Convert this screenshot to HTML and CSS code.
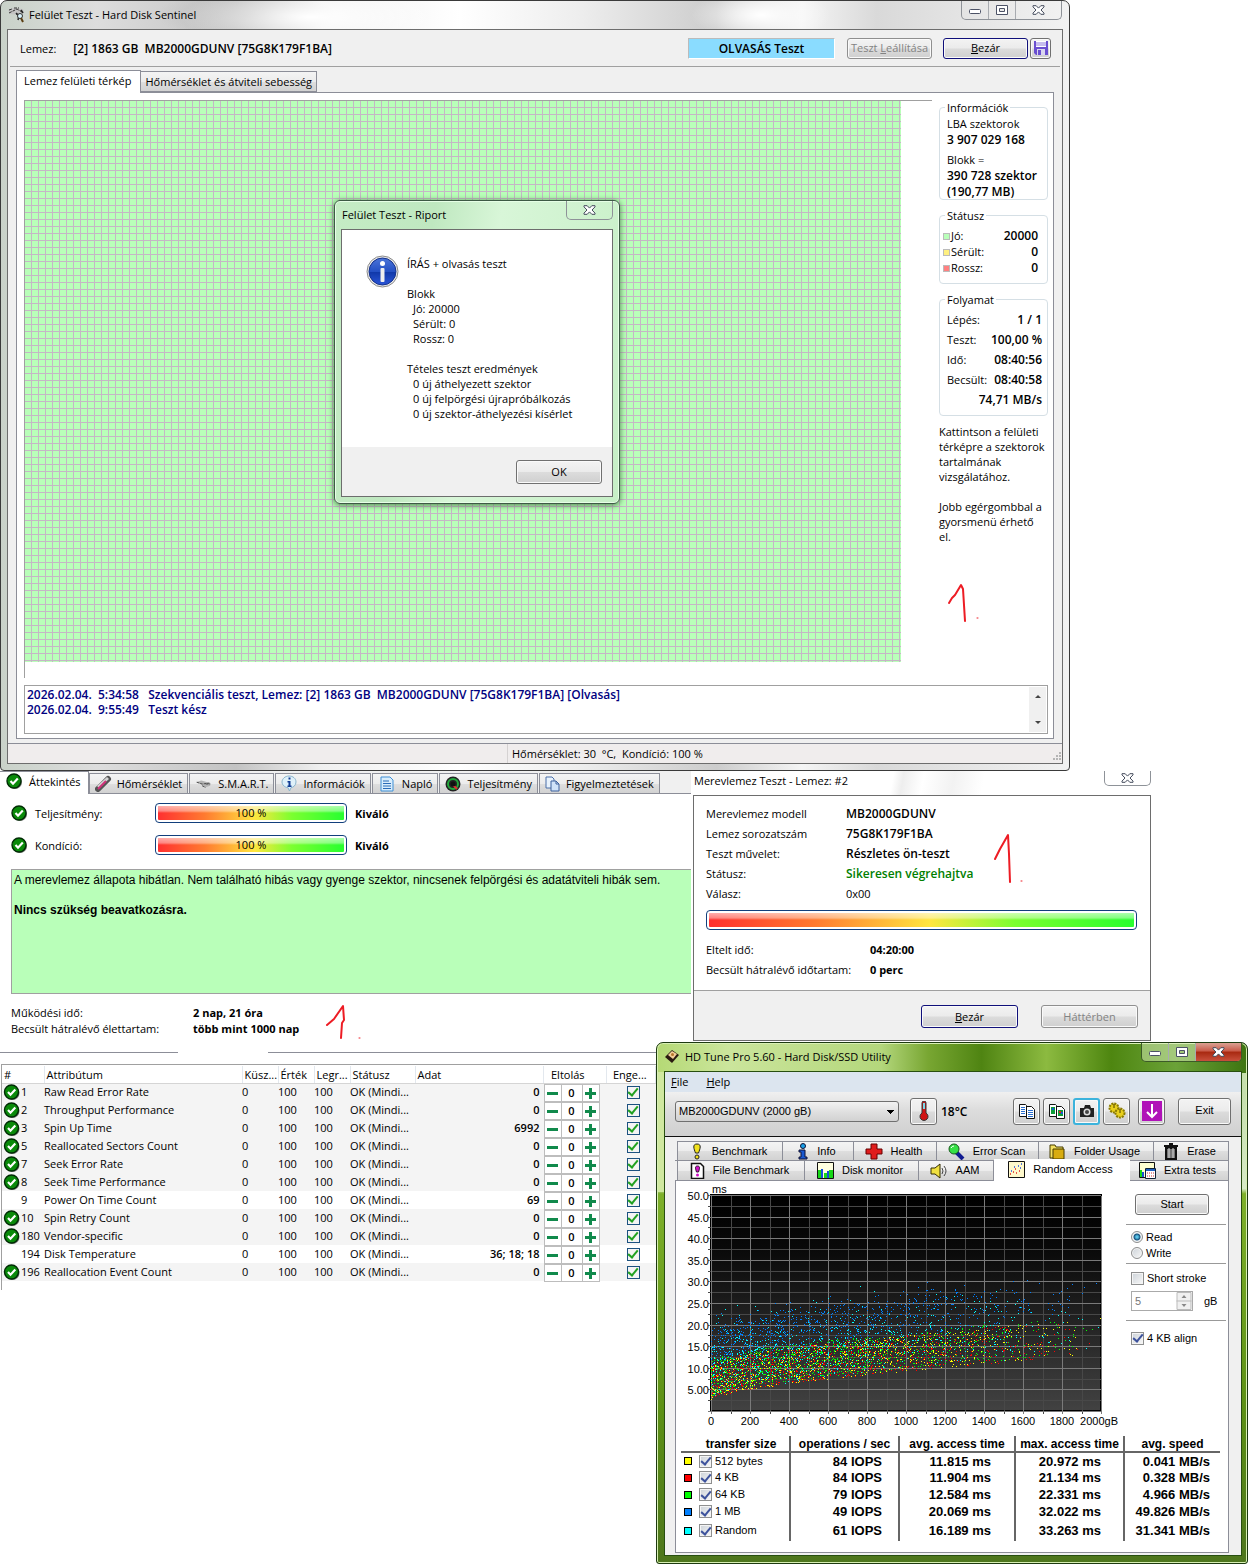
FILE: index.html
```html
<!DOCTYPE html>
<html lang="hu">
<head>
<meta charset="utf-8">
<title>Felület Teszt - Hard Disk Sentinel</title>
<link rel="stylesheet" href="styles.css">
<script src="app.js" defer></script>
</head>
<body>
<svg class="defs" aria-hidden="true">
  <symbol id="ok" viewBox="0 0 16 16"><circle cx="9" cy="9" r="7" fill="#777"/><circle cx="8" cy="8" r="7" fill="#0a8a0a" stroke="#012c05" stroke-width="1.4"/><path d="M4.500 8l2.500 2.700L11.800 5.600" fill="none" stroke="#fff" stroke-width="2.200"/></symbol>
  <symbol id="x" viewBox="0 0 13 10"><path d="M1 .7h3.200l2.300 2.400L8.800.7H12v1.200L9 5l3 3.100v1.200H8.800L6.500 6.900 4.200 9.300H1V8.100L4 5 1 1.900z" fill="#fff" stroke="#444b5c"/></symbol>
  <symbol id="min" viewBox="0 0 13 10"><rect x=".5" y="4.500" width="11" height="4" rx="1" fill="#fff" stroke="#4c5266"/></symbol>
  <symbol id="max" viewBox="0 0 13 10"><path d="M.5.5h11v9H.5zM3.500 3.500h5v3h-5z" fill="#fff" fill-rule="evenodd" stroke="#4c5266"/></symbol>
</svg>
<main class="desktop">

<section class="win surface">
  <header class="titlebar">
    <svg width="17" height="16" viewBox="0 0 17 16"><path d="M0 3l5-2 10 1 1 4-5 2-9-1z" fill="#c4c4c4"/><path d="M1 6l8-4 5 3M1 3l3-1M6 1h5M8 7l5 1" stroke="#333" fill="none" stroke-dasharray="3 1"/><path d="M8 6l3 3-1 4M13 3l2 3" stroke="#222" stroke-width="1.500" fill="none"/><circle cx="12" cy="9" r="2.500" fill="#d8f2fb" stroke="#333"/><path d="M13 11l2 4" stroke="#5a3d12" stroke-width="2"/></svg>
    <h1>Felület Teszt - Hard Disk Sentinel</h1>
    <div class="caption"><button aria-label="Kis méret"><svg width="13" height="10"><use href="#min"/></svg></button><button aria-label="Teljes méret"><svg width="13" height="10"><use href="#max"/></svg></button><button class="wide" aria-label="Bezárás"><svg width="13" height="10"><use href="#x"/></svg></button></div>
  </header>
  <div class="client">
    <div class="toolbar">
      <span>Lemez:</span><b class="disk">[2] 1863 GB&nbsp; MB2000GDUNV [75G8K179F1BA]</b>
      <b class="mode">OLVASÁS Teszt</b>
      <button class="btn" disabled>Teszt <u>L</u>eállítása</button>
      <button class="btn default"><u>B</u>ezár</button>
      <button class="btn save" aria-label="Mentés"><svg width="16" height="16" viewBox="0 0 16 16"><path d="M1 1h14v14H3l-2-2z" fill="#6a4fd0"/><path d="M3 1h10v6H3z" fill="#fff"/><path d="M3 3h10M3 5h10" stroke="#8d7bdc"/><path d="M4 9h8v6H4z" fill="#d9d6ef"/><path d="M5 10h3v5H5z" fill="#6a4fd0"/></svg></button>
    </div>
    <nav class="tabs"><button class="tab active">Lemez felületi térkép</button><button class="tab">Hőmérséklet és átviteli sebesség</button></nav>
    <div class="panel">
      <div class="work">
        <div class="map"><div class="blocks"></div></div>
        <aside class="side">
          <fieldset class="g-info"><legend>Információk</legend><p>LBA szektorok</p><b>3 907 029 168</b><p class="gap">Blokk =</p><b>390 728 szektor</b><b>(190,77 MB)</b></fieldset>
          <fieldset class="g-stat"><legend>Státusz</legend>
            <p class="kv"><i class="sw good"></i><span>Jó:</span><b>20000</b></p><p class="kv"><i class="sw hurt"></i><span>Sérült:</span><b>0</b></p><p class="kv"><i class="sw bad"></i><span>Rossz:</span><b>0</b></p></fieldset>
          <fieldset class="g-proc"><legend>Folyamat</legend>
            <p class="kv"><span>Lépés:</span><b>1 / 1</b></p><p class="kv"><span>Teszt:</span><b>100,00 %</b></p><p class="kv"><span>Idő:</span><b>08:40:56</b></p><p class="kv"><span>Becsült:</span><b>08:40:58</b></p><p class="kv"><b>74,71 MB/s</b></p></fieldset>
          <p class="hint">Kattintson a felületi<br>térképre a szektorok<br>tartalmának<br>vizsgálatához.<br><br>Jobb egérgombbal a<br>gyorsmenü érhető<br>el.</p>
        </aside>
      </div>
      <div class="log"><div><p>2026.02.04.&nbsp; 5:34:58&nbsp;&nbsp; Szekvenciális teszt, Lemez: [2] 1863 GB&nbsp; MB2000GDUNV [75G8K179F1BA] [Olvasás]</p><p>2026.02.04.&nbsp; 9:55:49&nbsp;&nbsp; Teszt kész</p></div>
        <div class="scroll"><svg width="8" height="5"><path d="M1 4l3-3 3 3z" fill="#444"/></svg><svg width="8" height="5"><path d="M1 1l3 3 3-3z" fill="#444"/></svg></div></div>
    </div>
    <footer class="status"><span></span><span>Hőmérséklet: 30&nbsp; °C,&nbsp; Kondíció: 100 %</span><svg width="12" height="12"><path d="M9 2h2M6 5h2M9 5h2M3 8h2M6 8h2M9 8h2" stroke="#b5b5b5" stroke-width="2"/></svg></footer>
  </div>
</section>

<section class="win report" role="dialog" aria-label="Riport">
  <header class="titlebar"><h2>Felület Teszt - Riport</h2><div class="caption"><button class="wide" aria-label="Bezárás"><svg width="13" height="10"><use href="#x"/></svg></button></div></header>
  <div class="client">
    <div class="message">
      <svg width="33" height="33" viewBox="0 0 33 33"><defs><linearGradient id="ib" x2="0" y2="1"><stop offset="0" stop-color="#4b74d8"/><stop offset=".5" stop-color="#2450c4"/><stop offset=".52" stop-color="#1038a8"/><stop offset="1" stop-color="#2a55d8"/></linearGradient></defs><circle cx="16.500" cy="16.500" r="15.500" fill="#e8e8e8" stroke="#8b8b8b"/><circle cx="16.500" cy="16.500" r="13.500" fill="url(#ib)" stroke="#15318a"/><circle cx="16.500" cy="8.500" r="2.500" fill="#fff"/><rect x="14.500" y="13" width="4" height="14" rx="1" fill="#eee"/></svg>
      <div class="lines"><p>ÍRÁS + olvasás teszt</p><br><p>Blokk</p><p class="in">Jó: 20000</p><p class="in">Sérült: 0</p><p class="in">Rossz: 0</p><br><p>Tételes teszt eredmények</p><p class="in">0 új áthelyezett szektor</p><p class="in">0 új felpörgési újrapróbálkozás</p><p class="in">0 új szektor-áthelyezési kísérlet</p></div>
    </div>
    <div class="actions"><button class="btn">OK</button></div>
  </div>
</section>

<section class="overview">
  <nav class="tabs">
    <button class="tab active"><svg width="16" height="16"><use href="#ok"/></svg>Áttekintés</button>
    <button class="tab"><svg width="17" height="17" viewBox="0 0 17 17"><path d="M3 14L13 4" stroke="#555" stroke-width="6" stroke-linecap="round"/><path d="M3 12L13 3" stroke="#d4d4d4" stroke-width="3"/><path d="M3 14l8-8" stroke="#d0307a" stroke-width="2"/></svg>Hőmérséklet</button>
    <button class="tab"><svg width="17" height="10" viewBox="0 0 19 10"><path d="M1 3l6-2 10 3v3l-6 2-5-4z" fill="#b4b4b4"/><path d="M2 3l6 2 8-1M8 7l4 2M12 5h5" stroke="#444" fill="none" stroke-dasharray="3 1"/></svg>S.M.A.R.T.</button>
    <button class="tab"><svg width="16" height="17" viewBox="0 0 16 17"><path d="M8 1c4 0 7 2.500 7 6s-3 5.500-5 5.700L8.500 16 7 12.700C4 12.500 1 10 1 7s3-6 7-6z" fill="#dff1fa" stroke="#8ab4cc"/><path d="M7.500 2.500h2v2h-2zM6.500 6h3v4.500h1V12h-4v-1.500h1v-3h-1z" fill="#123c94"/></svg>Információk</button>
    <button class="tab"><svg width="18" height="16" viewBox="-2 0 18 16"><path d="M1 1h9l3 3v11H1z" fill="#d8edfc" stroke="#3e8fd6"/><path d="M3 5h6M3 7.500h8M3 10h8M3 12.500h8" stroke="#2b6cb8"/></svg>Napló</button>
    <button class="tab"><svg width="16" height="16" viewBox="0 0 16 16"><circle cx="8" cy="8" r="7.500" fill="#222"/><circle cx="8" cy="8" r="5" fill="none" stroke="#22a83c" stroke-width="2"/><path d="M8 9l4 4" stroke="#e03030" stroke-width="2"/><circle cx="8" cy="8" r="2.500" fill="#111"/></svg>Teljesítmény</button>
    <button class="tab"><svg width="15" height="16" viewBox="0 0 15 16"><path d="M1 1h6l2 2v9H1z" fill="#e8f2fc" stroke="#4a6fa8"/><path d="M6 5h5l3 3v7H6z" fill="#cfe2f8" stroke="#3c619c"/><path d="M11 5v3h3" fill="none" stroke="#3c619c"/></svg>Figyelmeztetések</button>
  </nav>
  <div class="rates">
    <div class="rate"><svg width="16" height="16"><use href="#ok"/></svg><span>Teljesítmény:</span><div class="bar">100 %</div><b>Kiváló</b></div>
    <div class="rate"><svg width="16" height="16"><use href="#ok"/></svg><span>Kondíció:</span><div class="bar">100 %</div><b>Kiváló</b></div>
  </div>
  <div class="verdict"><p>A merevlemez állapota hibátlan. Nem található hibás vagy gyenge szektor, nincsenek felpörgési és adatátviteli hibák sem.</p><p><b>Nincs szükség beavatkozásra.</b></p></div>
  <dl class="life"><dt>Működési idő:</dt><dd>2 nap, 21 óra</dd><dt>Becsült hátralévő élettartam:</dt><dd>több mint 1000 nap</dd></dl>
  <div class="rules"><i></i><i></i></div>
  <div class="smart">
  <table>
    <colgroup><col class="c1"><col class="c2"><col class="c3"><col class="c3"><col class="c3"><col class="c6"><col><col class="c8"><col class="c9"></colgroup>
    <thead><tr><th>#</th><th>Attribútum</th><th>Küsz...</th><th>Érték</th><th>Legr...</th><th>Státusz</th><th>Adat</th><th>Eltolás</th><th>Enge...</th></tr></thead>
    <tbody id="attrs"></tbody>
  </table>
  </div>
</section>

<section class="test">
  <header class="titlebar"><h2>Merevlemez Teszt - Lemez: #2</h2><div class="caption"><button class="wide" aria-label="Bezárás"><svg width="13" height="10"><use href="#x"/></svg></button></div></header>
  <div class="client">
    <dl><dt>Merevlemez modell</dt><dd>MB2000GDUNV</dd><dt>Lemez sorozatszám</dt><dd>75G8K179F1BA</dd><dt>Teszt művelet:</dt><dd>Részletes ön-teszt</dd><dt>Státusz:</dt><dd class="done">Sikeresen végrehajtva</dd><dt>Válasz:</dt><dd class="plain">0x00</dd></dl>
    <div class="bar"></div>
    <dl class="times"><dt>Eltelt idő:</dt><dd>04:20:00</dd><dt>Becsült hátralévő időtartam:</dt><dd>0 perc</dd></dl>
    <div class="actions"><button class="btn default"><u>B</u>ezár</button><button class="btn" disabled>Háttérben</button></div>
  </div>
</section>

<section class="win tune">
  <header class="titlebar"><svg width="15" height="15" viewBox="0 0 15 15"><path d="M0 8l7-7 7 5-7 8z" fill="#2a1a10"/><path d="M3 6l4-4 5 3-4 5z" fill="#f3cf98"/><circle cx="7.500" cy="5.500" r="1.500" fill="#b5762c"/></svg><h2>HD Tune Pro 5.60 - Hard Disk/SSD Utility</h2>
  <div class="caption"><button aria-label="Minimize"><svg width="13" height="10"><use href="#min"/></svg></button><button aria-label="Maximize"><svg width="13" height="10"><use href="#max"/></svg></button><button class="wide close" aria-label="Close"><svg width="13" height="10"><use href="#x"/></svg></button></div></header>
  <div class="client">
    <nav class="menu"><a href="#"><u>F</u>ile</a><a href="#"><u>H</u>elp</a></nav>
    <div class="tools">
      <select class="drive" aria-label="Drive"><option>MB2000GDUNV (2000 gB)</option></select>
      <button class="btn ic therm" aria-label="Temperature"><svg width="12" height="20" viewBox="0 0 12 20"><path d="M4 2a2 2 0 014 0v10a4 4 0 11-4 0z" fill="#d01414" stroke="#333"/><path d="M5 2h2v6H5z" fill="#7fd8e8"/></svg></button><b>18°C</b>
      <button class="btn ic first" aria-label="Copy text"><svg width="18" height="16" viewBox="0 0 18 16"><path d="M1.500 1.500h6l1 1v11h-7zM8.500 3.500h5l3 3v9h-8z" fill="#fff" stroke="#111"/><path d="M3 4.500h4M3 6.500h4M3 8.500h4M3 10.500h4" stroke="#2a6fd0"/><path d="M10 7.500h5M10 9.500h5M10 11.500h5M10 13.500h5" stroke="#2a6fd0"/></svg></button>
      <button class="btn ic" aria-label="Copy image"><svg width="18" height="16" viewBox="0 0 18 16"><path d="M1.500 1.500h6l1 1v11h-7zM8.500 3.500h5l3 3v9h-8z" fill="#fff" stroke="#111"/><path d="M3 4h4v7H3z" fill="#0c9c38"/><path d="M10 7h5v6h-5z" fill="#0c9c38"/><path d="M4 5h2v2H4zM13 9h2v2h-2z" fill="#1858d8"/><path d="M11 8h2v2h-2z" fill="#e02020"/></svg></button>
      <button class="btn ic hot" aria-label="Screenshot"><svg width="16" height="14" viewBox="0 0 16 14"><path d="M1 4h4l1-3h5l1 3h3v9H1z" fill="#222"/><circle cx="8" cy="8" r="3.500" fill="#ddd"/><circle cx="8" cy="8" r="2" fill="#444"/></svg></button>
      <button class="btn ic" aria-label="Options"><svg width="18" height="17" viewBox="0 0 18 17"><g fill="#e8cf1c" stroke="#8a7a00"><circle cx="6" cy="6" r="4.500" stroke-dasharray="2 1" stroke-width="2"/><circle cx="12" cy="11" r="4.500" stroke-dasharray="2 1" stroke-width="2"/></g><path d="M6 2v4M12 7v4" stroke="#4a4000"/></svg></button>
      <button class="btn ic last" aria-label="Save"><svg width="20" height="20" viewBox="0 0 20 20"><path d="M0 0h20v20H0z" fill="#b012b8"/><path d="M10 3v13M5 11l5 5 5-5" fill="none" stroke="#fff" stroke-width="2"/></svg></button>
      <button class="btn exit">Exit</button>
    </div>
    <div class="body">
      <nav class="tabs row1">
        <button class="tab"><svg width="14" height="17" viewBox="0 0 14 17"><path d="M7 1c5 0 3 5 1.500 9h-3C4 6 2 1 7 1z" fill="#f2e21c" stroke="#222"/><circle cx="7" cy="14" r="2" fill="#f2e21c" stroke="#222"/></svg>Benchmark</button>
        <button class="tab"><svg width="12" height="17" viewBox="0 0 12 17"><circle cx="6" cy="3" r="2.500" fill="#18a0e8" stroke="#113"/><path d="M2 7h6v7h2v2H2v-2h2V9H2z" fill="#1858d0" stroke="#113"/></svg>Info</button>
        <button class="tab"><svg width="18" height="17" viewBox="0 0 18 17"><path d="M6 1h6v5h5v5h-5v5H6v-5H1V6h5z" fill="#e01c1c" stroke="#600"/></svg>Health</button>
        <button class="tab"><svg width="18" height="17" viewBox="0 0 18 17"><path d="M9 9l7 7" stroke="#111a90" stroke-width="4"/><circle cx="7" cy="6" r="5" fill="#35e045" stroke="#165a1c"/><path d="M4 5q1-2 3-2" stroke="#fff" fill="none"/></svg>Error Scan</button>
        <button class="tab"><svg width="17" height="17" viewBox="0 0 17 17"><path d="M1 2h5l1 2h7v11H1z" fill="#f4e060" stroke="#443a00"/><path d="M4 6h11v10H4z" fill="#d8ac10" stroke="#443a00"/></svg>Folder Usage</button>
        <button class="tab"><svg width="16" height="17" viewBox="0 0 16 17"><path d="M1 3h14M6 1h4M3 5h10v11H3z" stroke="#111" stroke-width="2" fill="#777"/><path d="M6 5v10M10 5v10" stroke="#ddd"/></svg>Erase</button>
      </nav>
      <nav class="tabs row2">
        <button class="tab"><svg width="15" height="17" viewBox="0 0 15 17"><path d="M1.500 1.500h9l3 3v12h-12z" fill="#fff" stroke="#111" stroke-width="1.500"/><path d="M7.500 4c3 0 2 3 1 6h-2c-1-3-2-6 1-6z" fill="#d010c8" stroke="#313"/><circle cx="7.500" cy="13" r="1.500" fill="#d010c8"/></svg>File Benchmark</button>
        <button class="tab"><svg width="17" height="17" viewBox="0 0 17 17"><path d="M.5.5h16v16H.5z" fill="#ffffe0" stroke="#111"/><path d="M1 8h3v8H1zM7 11h3v5H7zM12 8h4v8h-4z" fill="#18d818"/><path d="M4 7h2v9H4zM10 9h2v7h-2z" fill="#1850d8"/></svg>Disk monitor</button>
        <button class="tab"><svg width="18" height="16" viewBox="0 0 18 16"><path d="M1 5h4l5-4v14l-5-4H1z" fill="#f0e040" stroke="#332c00"/><path d="M12 5q2 3 0 6M14 3q4 5 0 10" fill="none" stroke="#444"/></svg>AAM</button>
        <button class="tab active"><svg width="17" height="17" viewBox="0 0 17 17"><path d="M.5.5h16v16H.5z" fill="#fff9cc" stroke="#111"/><path d="M2 13h1M5 11h1M8 12h1M11 10h1M7 8h1" stroke="#e02020" stroke-width="1.500"/><path d="M3 10h1M6 6h1M10 5h1M13 3h1M12 7h1" stroke="#2050e0" stroke-width="1.500"/></svg>Random Access</button>
        <button class="tab"><svg width="17" height="17" viewBox="0 0 17 17"><path d="M.5.5h15v15H.5z" fill="#ffffd0" stroke="#111"/><path d="M1 8h2v7H1z" fill="#18d818"/><path d="M3 10h2v5H3z" fill="#1850d8"/><path d="M6.500 6.500h10v10h-10z" fill="#fff" stroke="#123"/><path d="M7 7h9v2H7z" fill="#2060c0"/><path d="M8 11h7M8 14h7" stroke="#d03030" stroke-dasharray="1 1"/></svg>Extra tests</button>
      </nav>
      <div class="page">
        <div class="upper">
          <svg id="chart" width="445" height="246" role="img" aria-label="Access time by position"></svg>
          <form class="opts">
            <button type="button" class="btn">Start</button><hr>
            <label><input type="radio" name="rw" checked>Read</label><label><input type="radio" name="rw">Write</label><hr>
            <label class="short"><input type="checkbox">Short stroke</label>
            <div class="size"><input type="text" value="5" aria-label="Stroke size" disabled><svg width="15" height="18" viewBox="0 0 15 18"><path d="M.5.500h14v17H.5zM0 9h15" fill="#f0f0f0" stroke="#bbb"/><path d="M5 6l2.500-3L10 6zM5 12l2.500 3 2.500-3z" fill="#888"/></svg><span>gB</span></div><hr>
            <label class="align"><input type="checkbox" checked>4 KB align</label>
          </form>
        </div>
        <table class="stats">
          <colgroup><col class="s1"><col class="s2"><col class="s3"><col class="s2"><col></colgroup>
          <thead><tr><th>transfer size</th><th>operations / sec</th><th>avg. access time</th><th>max. access time</th><th>avg. speed</th></tr></thead>
          <tbody>
          <tr><td><label><i class="sw yellow"></i><input type="checkbox" checked>512 bytes</label></td><td>84 IOPS</td><td>11.815 ms</td><td>20.972 ms</td><td>0.041 MB/s</td></tr>
          <tr><td><label><i class="sw red"></i><input type="checkbox" checked>4 KB</label></td><td>84 IOPS</td><td>11.904 ms</td><td>21.134 ms</td><td>0.328 MB/s</td></tr>
          <tr><td><label><i class="sw green"></i><input type="checkbox" checked>64 KB</label></td><td>79 IOPS</td><td>12.584 ms</td><td>22.331 ms</td><td>4.966 MB/s</td></tr>
          <tr><td><label><i class="sw blue"></i><input type="checkbox" checked>1 MB</label></td><td>49 IOPS</td><td>20.069 ms</td><td>32.022 ms</td><td>49.826 MB/s</td></tr>
          <tr><td><label><i class="sw cyan"></i><input type="checkbox" checked>Random</label></td><td>61 IOPS</td><td>16.189 ms</td><td>33.263 ms</td><td>31.341 MB/s</td></tr>
          </tbody>
        </table>
      </div>
    </div>
  </div>
</section>

<svg class="mark m1" width="34" height="44"><path d="M3 23L6 18 9 15 15 5 17 9 19 41" /><path d="M31 38h1"/></svg>
<svg class="mark m2" width="34" height="58"><path d="M3 29L8 19 16 5 17 24 18 52"/><path d="M29 51h1"/></svg>
<svg class="mark m3" width="40" height="40"><path d="M3 22L10 16 19 3 20 17 18 20 17 35"/><path d="M35 35h1"/></svg>
</main>
</body>
</html>
```

FILE: styles.css
```css
* { box-sizing: border-box; }
body { margin: 0; background: #fff; color: #000; font: 11px/15px "Open Sans", "Noto Sans", sans-serif; }
p, h1, h2, dl, dd, fieldset { margin: 0; padding: 0; }
h1, h2 { font-size: 11px; font-weight: 400; line-height: 15px; }
b, dd { font-weight: 600; }
button, input, select { font: inherit; color: inherit; margin: 0; }
.defs { display: none; }
svg { flex: none; }
.desktop { position: relative; min-height: 1564px; overflow: hidden; }
.win, .overview, .test, .mark { position: absolute; }
.client { border: 1px solid #6d6d6d; }
.titlebar { display: flex; align-items: center; padding-bottom: 2px; }
.caption { display: flex; margin-left: auto; align-self: flex-start; border: 1px solid #8e9298; border-top: 0; border-radius: 0 0 5px 5px; overflow: hidden; }
.caption button { display: grid; place-items: center; width: 27px; height: 18px; padding: 0; border: 0; border-right: 1px solid #a8abb0; background: none; }
.caption .wide { width: 45px; border: 0; }
.btn { display: grid; grid-auto-flow: column; place-content: center; white-space: pre; height: 21px; padding: 0 0 1px; border: 1px solid #707070; border-radius: 3px; background: linear-gradient(#f3f3f3, #ebebeb 49%, #dcdcdc 51%, #cfcfcf); box-shadow: inset 0 0 0 1px #fafafa; }
.btn:disabled { color: #838383; border-color: #8f8f8f; }
.btn.default { border-color: #10107a; }
.tabs { display: flex; align-items: flex-end; }
.tab { display: flex; align-items: center; white-space: nowrap; padding: 0 4px; height: 21px; border: 1px solid #8c8e98; border-left: 0; background: linear-gradient(#f4f4f4, #ececec 50%, #dedede 52%, #d2d2d2); }
.tab.active { background: #fff; border-left: 1px solid #8c8e98; border-bottom: 0; height: 23px; }
.actions { display: flex; justify-content: flex-end; background: #f0f0f0; }
.bar { height: 20px; border: 1px solid #123f7c; border-radius: 4px; padding: 2px; text-align: center; line-height: 14px; background: linear-gradient(rgba(255,255,255,.6), rgba(255,255,255,.4) 35%, rgba(255,255,255,0) 50%) content-box, linear-gradient(90deg, #ff3030, #ff7a30 25%, #ffe640 52%, #7bff30 72%, #28ff30) content-box, #fff; }

/* Surface test window */
.surface { left: 0; right: 178px; top: 0; padding: 1px 6px 6px; border: 1px solid #3a3a3a; border-radius: 7px 7px 4px 4px; background: radial-gradient(ellipse 130px 30px at 310px 16px, #fff, transparent), radial-gradient(ellipse 70px 26px at 760px 14px, #fff, transparent), radial-gradient(ellipse 90px 24px at 245px 14px, #bbb, transparent), linear-gradient(90deg, #c9d2c9, #ddd 9%, #c3c3c3 22%, #f0f0f0 30%, #fff 43%, #eee 54%, #ccc 67%, #f5f5f5 75%, #d9d9d9 82%, #f2f2f2 100%); }
.surface > .titlebar { height: 27px; gap: 4px; padding-left: 1px; }
.surface > .titlebar .caption { margin: -1px 1px 0 auto; }
.surface > .client { background: #f0f0f0; }
.surface .disk, .surface .mode, .side b { font-size: 12px; }
.toolbar { display: flex; align-items: center; height: 37px; padding: 0 9px 0 10px; margin: 0 2px; border-bottom: 1px solid #a0a0a0; }
.toolbar .disk { margin-left: 17px; }
.toolbar .mode { width: 147px; height: 21px; line-height: 19px; margin-left: auto; text-align: center; background: #8adcff; border: 1px solid #bbb; border-right-color: #fff; border-bottom-color: #fff; }
.toolbar .btn { width: 85px; margin-left: 11px; }
.toolbar .btn:disabled { margin-left: 12px; }
.toolbar .save { width: 21px; margin-left: 2px; }
.surface .tabs { padding: 3px 8px 0; }
.surface .tab.active { z-index: 1; margin-bottom: -1px; padding: 0 9px 3px 7px; }
.panel { margin: 0 8px 4px; padding: 7px 5px 4px 7px; border: 1px solid #8c8e98; background: #fff; }
.work { display: flex; gap: 7px; }
.map { flex: 1; height: 578px; border: 1px solid #a0a0a0; border-right: 0; border-bottom: 0; }
.blocks { width: calc(100% - 31px); height: 561px; background: repeating-linear-gradient(90deg, transparent 0 6px, #c5b6c5 6px 7px), repeating-linear-gradient(#b9ffb9 0 6px, #c5b6c5 6px 7px); }
.side { width: 109px; }
fieldset { min-width: 0; border: 1px solid #d5dfe5; border-radius: 4px; line-height: 16px; }
legend { padding: 0 2px; margin-left: 5px; line-height: 15px; }
fieldset > b, fieldset > p { display: block; padding: 0 6px 0 7px; white-space: nowrap; }
.g-info { height: 100px; padding-top: 1px; }
.g-info .gap { margin-top: 4px; }
.g-stat { height: 76px; margin-top: 8px; padding-top: 5px; }
.g-proc { height: 124px; margin-top: 8px; padding-top: 3px; line-height: 20px; }
fieldset > .kv { display: flex; align-items: center; padding-right: 5px; }
.g-stat > .kv { padding: 0 9px 0 3px; }
.g-stat > .kv, .g-info > p, .g-info > b { height: 16px; }
.g-proc > .kv { height: 20px; }
.kv b { margin-left: auto; }
.sw { width: 7px; height: 7px; border: 1px solid #bbb; margin-right: 1px; }
.good { background: #b9ffb9; } .hurt { background: #fff080; } .bad { background: #ff8080; }
.hint { margin-top: 8px; white-space: nowrap; }
.log { display: flex; justify-content: space-between; height: 49px; margin-top: 7px; padding: 1px 1px 1px 2px; border: 1px solid #a0a0a0; color: #000080; font-size: 12px; font-weight: 600; white-space: nowrap; }
.scroll { display: flex; flex-direction: column; justify-content: space-between; align-items: center; width: 17px; padding: 7px 0; background: #f0f0f0; }
.status { display: flex; height: 20px; border-top: 1px solid #8c8e98; background: #f0eded; line-height: 19px; }
.status span:first-child { flex: 0 0 500px; border-right: 1px solid #d5d2d2; margin-right: 4px; }
.status svg { margin: 7px 0 0 auto; }

/* Report dialog */
.report { left: 334px; top: 200px; width: 286px; padding: 0 6px 6px; border: 1px solid #3d5a45; border-radius: 6px; background: linear-gradient(100deg, #c5ecc5, #bfe8c0 30%, #d8f6d8 50%, #c6efc6); box-shadow: 0 1px 6px #4a7a4a, inset 0 0 0 1px #e6ffe6; }
.report .titlebar { height: 28px; padding-left: 1px; }
.report .client { background: #fff; }
.message { display: flex; align-items: flex-start; gap: 8px; height: 217px; padding: 25px 0 0 24px; white-space: nowrap; }
.lines { margin-top: 1px; }
.in { padding-left: 6px; }
.report .actions { height: 49px; padding: 13px 10px; }
.report .btn { width: 86px; height: 24px; }

/* Overview */
.overview { left: 0; right: 557px; top: 771px; }
.overview > .tabs { background: #f0f0f0; box-shadow: inset 0 -1px #8c8e98; }
.overview .tab { gap: 5px; padding: 0 5px; margin-right: 1px; border-left: 1px solid #8c8e98; }
.overview .tab:nth-child(n+3) { gap: 6px; }
.overview .tab.active { border-left: 0; padding: 0 7px 4px 6px; margin: 0; gap: 7px; }
.rates { display: grid; gap: 12px; padding: 9px 11px 0; }
.rate { display: grid; grid-template-columns: 16px 112px 192px 1fr; gap: 8px; align-items: center; height: 20px; }
.rate b, .life dd { font-weight: 700; }
.verdict { margin: 14px 0 0 11px; height: 125px; padding: 3px 2px; border: 1px solid #a0a0a0; border-right: 0; background: #b9ffb9; font: 12px/15px "Liberation Sans", Arial, sans-serif; white-space: nowrap; }
.verdict p + p { margin-top: 15px; }
.verdict b { font-weight: 700; }
.life { display: grid; grid-template-columns: 182px 1fr; margin: 11px 11px 15px; line-height: 16px; }
.rules { display: flex; gap: 90px; padding-right: 35px; }
.rules i { width: 178px; border-top: 1px solid #8c8e98; }
.rules i + i { flex: 1; }
.smart { margin: 11px 35px 0 1px; padding: 1px 0 9px; border: 1px solid #a0a0a0; border-width: 1px 0 0 1px; }
.smart table { table-layout: fixed; width: 100%; border-collapse: collapse; white-space: nowrap; }
.smart th { height: 17px; padding: 0 0 0 2px; font-weight: 400; text-align: left; border-right: 1px solid #e3e8ee; border-bottom: 1px solid #d5d5d5; }
.smart th:nth-child(8) { padding-left: 7px; }
.smart th:nth-child(9) { padding-left: 6px; }
.smart td { height: 18px; padding: 0; line-height: 16px; }
.smart .marked td { background: #f4f4f4; }
.smart td:nth-child(7) { text-align: right; font-weight: 600; padding-right: 4px; }
.c1 { width: 42px; } .c2 { width: 198px; } .c3 { width: 36px; } .c6 { width: 65px; } .c8 { width: 63px; } .c9 { width: 49px; }
.id { display: flex; align-items: center; padding-left: 1px; gap: 1px; }
.id i { width: 17px; height: 16px; }
.step { display: grid; grid-template-columns: 17px 21px 17px; width: 55px; height: 16px; }
.step > * { display: grid; place-content: center; padding: 0; margin-right: -1px; border: 1px solid #bdbdbd; background: #fff; font-weight: 600; }

/* Tick boxes and radios */
input[type=checkbox], input[type=radio] { appearance: none; flex: none; width: 13px; height: 13px; margin: 0; border: 1px solid #8e8f8f; background: linear-gradient(135deg, #ccd2d8, #f8f8f8); box-shadow: inset 0 0 0 1px #f4f4f4; }
input[type=radio] { border-radius: 50%; width: 12px; height: 12px; }
input[type=radio]:checked { background: radial-gradient(circle, #58c4e8 0 1px, #14507c 3px, #e8eef2 4px); }
input[type=checkbox]:checked { display: grid; place-content: center; }
input[type=checkbox]:checked::before { content: ""; width: 4px; height: 8px; margin-top: -2px; border: solid #3d529c; border-width: 0 2px 2px 0; rotate: 40deg; }
.smart input[type=checkbox] { display: grid; margin: 0 0 0 20px; border-color: #1c5280; background: #f4f4f4; }
.smart input[type=checkbox]:checked::before { border-color: #21a121; }

/* Self-test window */
.test { left: 691px; right: 97px; top: 771px; padding-left: 2px; background: linear-gradient(100deg, #fff 40%, #eee 42%, #fff 46%, #f2f2f2 52%, #fff 58%); }
.test .titlebar { height: 24px; padding: 0 0 6px 1px; }
.test .caption button { height: 14px; }
.test .client { background: #fff; }
.test dl { display: grid; grid-template-columns: 140px 1fr; grid-auto-rows: 20px; padding: 8px 12px 0; line-height: 20px; }
.test dd { font-size: 12px; }
.test .bar { margin: 6px 13px 2px 12px; }
.test .times { grid-template-columns: 164px 1fr; }
.test .times dd { font-size: 11px; font-weight: 700; }
.test .done { color: #008000; }
.test .plain { font-size: 11px; font-weight: 400; }
.test .actions { gap: 23px; margin-top: 10px; padding: 14px 12px 12px; border-top: 1px solid #a0a0a0; }
.test .btn { width: 97px; height: 23px; }

/* HD Tune window */
.tune { left: 656px; right: 0; top: 1042px; padding: 0 5px 7px 7px; border: 1px solid #1d3a10; border-radius: 7px 7px 3px 3px; background: linear-gradient(#d0e8a0 0 100%) 0 29px / 8px 120px no-repeat, linear-gradient(90deg, #b5d975, #cbe59c 12%, #b4d77c 38%, #78a632 46%, #4f8412 55%, #8cba40 66%, #4e8610 77%, #6ba238 88%, #3d7410) 0 0 / 100% 30px no-repeat, linear-gradient(#c6dfae 10%, #d8ebc8 28%, #7eb02a 29%, #5d9115 70%, #4e761d); box-shadow: inset 0 0 0 1px #d8efb4; font-family: "Liberation Sans", Arial, sans-serif; }
.tune > .titlebar { height: 28px; gap: 5px; padding-left: 1px; }
.tune h2, .menu { font-family: "Open Sans", sans-serif; }
.tune .caption { border-color: #3c5a28; background: rgba(220,240,190,.5); }
.tune .caption .close { background: linear-gradient(#dba294, #c85a48 45%, #a82810 50%, #c8503c); }
.tune > .client { background: #f0f0f0; border-color: #284f10; }
.menu { display: flex; gap: 18px; height: 20px; padding: 0 6px 2px; align-items: center; background: #dce5ef; }
.menu a { color: #000; text-decoration: none; }
.tools { display: flex; align-items: center; height: 45px; padding: 0 10px 6px; background: linear-gradient(#f0f0f0, #ddd 40%, #d0d0d0); border-bottom: 1px solid #111; }
.drive { width: 224px; height: 21px; padding: 0 3px; appearance: none; border: 1px solid #707070; border-radius: 3px; background: linear-gradient(#000, #000) right 4px top 8px / 7px 1px no-repeat, linear-gradient(#000, #000) right 5px top 9px / 5px 1px no-repeat, linear-gradient(#000, #000) right 6px top 10px / 3px 1px no-repeat, linear-gradient(#000, #000) right 7px top 11px / 1px 1px no-repeat, linear-gradient(#f2f2f2, #ddd 60%, #d2d2d2); }
.tools b { font: 600 12px/15px "Open Sans", sans-serif; }
.ic { width: 27px; height: 27px; margin-left: 3px; }
.therm { margin: 0 4px 0 11px; }
.first { margin-left: auto; }
.hot { border: 2px solid #3cb3dc; }
.last { margin: 0 13px 0 8px; }
.exit { width: 53px; height: 27px; }
.body { padding: 4px 12px 2px 10px; }
.tune .tabs { display: grid; padding-left: 2px; }
.tune .row1 { grid-template-columns: 106fr 71fr 83fr 102fr 115fr 75fr; }
.tune .row2 { grid-template-columns: 128fr 114fr 75fr 136fr 99fr; height: 20px; border-top: 1px solid #8c8e98; }
.tune .tab { gap: 8px; height: 19px; padding: 0 3px 0 0; justify-content: center; border-bottom: 0; overflow: hidden; }
.row1 .tab:first-child, .row2 .tab:first-child { border-left: 1px solid #8c8e98; }
.row2 .tab { border-top: 0; }
.tune .tab.active { height: 22px; margin: -2px 0 -1px; z-index: 1; padding-bottom: 2px; border: 0; }
.page { padding: 2px 2px 11px 5px; border: 1px solid #8c8e98; background: #fff; }
.upper { display: flex; }
#chart { display: block; flex: 1; min-width: 445px; font-size: 11px; }
.opts { width: 100px; margin-top: 11px; }
.opts label, .stats label { display: flex; align-items: center; gap: 3px; height: 16px; }
.opts > label { padding-left: 5px; }
.opts > .btn { width: 74px; margin: 0 0 9px 9px; }
.opts hr { width: 100%; margin: 0; border: 0; border-top: 1px solid #999; }
.opts hr + label { margin-top: 4px; }
.opts label + hr { margin-top: 2px; }
.opts .short { margin: 6px 0 5px; }
.size { display: flex; align-items: center; height: 20px; margin: 0 0 9px 5px; }
.size input { width: 45px; height: 20px; padding: 0 3px; border: 1px solid #aaa; border-right: 0; background: #fff; color: #777; }
.size svg { width: 17px; height: 20px; border: 1px solid #aaa; border-left: 0; }
.size span { margin-left: 11px; }
.opts .align { margin-top: 9px; }
.stats { table-layout: fixed; width: calc(100% - 6px); margin-top: 7px; border-collapse: collapse; white-space: nowrap; font-weight: 700; }
.stats th { height: 16px; padding: 0; border-bottom: 2px solid #666; text-align: center; font-size: 12px; line-height: 14px; }
.stats th:first-child { padding-left: 12px; }
.stats td { height: 17px; padding: 0 10px 0 3px; font-size: 13px; text-align: right; }
.stats th + th, .stats td + td { border-left: 2px solid #666; }
.stats td:nth-child(2) { padding-right: 16px; }
.stats td:nth-child(3) { padding-right: 23px; }
.stats td:nth-child(4) { padding-right: 22px; }
.stats label { font-size: 11px; font-weight: 400; }
.s1 { width: 109px; } .s2 { width: 109px; } .s3 { width: 116px; }
.stats tr:last-child td { height: 21px; }
.stats .sw { width: 8px; height: 8px; border-color: #000; margin-right: 4px; }
.yellow { background: #ff0; } .red { background: #f00; } .green { background: #0f0; } .blue { background: #0080ff; } .cyan { background: #0ff; }

.mark { fill: none; stroke: #ed1c24; stroke-width: 2; stroke-linejoin: round; stroke-linecap: round; }
.mark path + path { stroke-width: 1; }
.m1 { left: 946px; top: 580px; }
.m2 { left: 992px; top: 830px; }
.m3 { left: 324px; top: 1003px; }
```

FILE: app.js
```js
const attributes = [
  [1, 'Raw Read Error Rate', '0', true], [2, 'Throughput Performance', '0', true],
  [3, 'Spin Up Time', '6992', true], [5, 'Reallocated Sectors Count', '0', true],
  [7, 'Seek Error Rate', '0', true], [8, 'Seek Time Performance', '0', true],
  [9, 'Power On Time Count', '69', false], [10, 'Spin Retry Count', '0', true],
  [180, 'Vendor-specific', '0', true], [194, 'Disk Temperature', '36; 18; 18', false],
  [196, 'Reallocation Event Count', '0', true]
];
const tick = '<svg width="17" height="16"><use href="#ok"/></svg>';
const sign = d => `<svg width="11" height="11"><path d="${d}" stroke="#118a4c" stroke-width="3"/></svg>`;
document.getElementById('attrs').innerHTML = attributes.map(([id, name, data, ok]) => `
  <tr class="${ok ? 'marked' : ''}"><td><div class="id">${ok ? tick : '<i></i>'}${id}</div></td><td>${name}</td>
  <td>0</td><td>100</td><td>100</td><td>OK (Mindi...</td><td>${data}</td>
  <td><div class="step"><button aria-label="Csökkentés">${sign('M0 5.5h11')}</button><span>0</span><button aria-label="Növelés">${sign('M0 5.5h11M5.5 0v11')}</button></div></td>
  <td><input type="checkbox" checked aria-label="${name}"></td></tr>`).join('');

// Access-time chart: 0-2000 gB across, 0-50 ms up
const X0 = 30, Y0 = 228, W = 390, H = 216;
let s = `<defs><linearGradient id="bg" x2="0" y2="1"><stop offset="0"/><stop offset=".25" stop-color="#090909"/><stop offset="1" stop-color="#424242"/></linearGradient></defs>
<rect x="${X0}" y="${Y0 - H}" width="${W}" height="${H}" fill="url(#bg)" stroke="#000" stroke-width="2"/><g shape-rendering="crispEdges">`;
for (const c of ['#484848', '#7a7a7a']) {
  for (let i = c === '#484848' ? 1 : 0; i <= 20; i += 2) {
    const x = X0 + Math.round(i * W / 20), y = Y0 - Math.round(i * H / 20);
    s += `<path d="M${x} ${Y0 - H + 1}V${Y0 + 3}M${X0 - 3} ${y}H${X0 + W}" stroke="${c}"/>`;
  }
}
let seed = 7;
const rnd = () => (seed = (seed * 16807) % 2147483647) / 2147483647;
const sets = [['#ffff00', 900, 0], ['#ff0000', 800, 0], ['#00ff00', 850, .6], ['#0080ff', 800, 7], ['#00ffff', 850, -1]];
const dots = sets.map(() => '');
sets.forEach(([, n, extra], k) => {
  for (let i = 0; i < n; i++) {
    const gb = 2000 * (1 - Math.sqrt(1 - rnd()));
    const add = extra < 0 ? rnd() * rnd() * 14 : extra;
    const ms = 2.4 + .16 * Math.sqrt(gb) + .0018 * gb + add + rnd() * 8.4 + (k === 3 ? gb * .001 + rnd() * rnd() * 5 : 0);
    dots[k] += `M${X0 + Math.floor(gb * W / 2000)} ${Y0 - Math.round(ms * H / 50)}h1`;
  }
});
sets.forEach(([c], k) => { s += `<path d="${dots[k]}" stroke="${c}"/>`; });
s += '</g><text x="31" y="10">ms</text>';
for (let i = 1; i <= 10; i++) s += `<text x="28" y="${Y0 - Math.round(i * H / 10) + 5}" text-anchor="end">${i === 1 ? '5.00' : (i * 5) + '.0'}</text>`;
for (let i = 0; i < 10; i++) s += `<text x="${X0 + i * 39}" y="242" text-anchor="middle">${i * 200}</text>`;
s += '<text x="437" y="242" text-anchor="end">2000gB</text>';
document.getElementById('chart').innerHTML = s;
```
